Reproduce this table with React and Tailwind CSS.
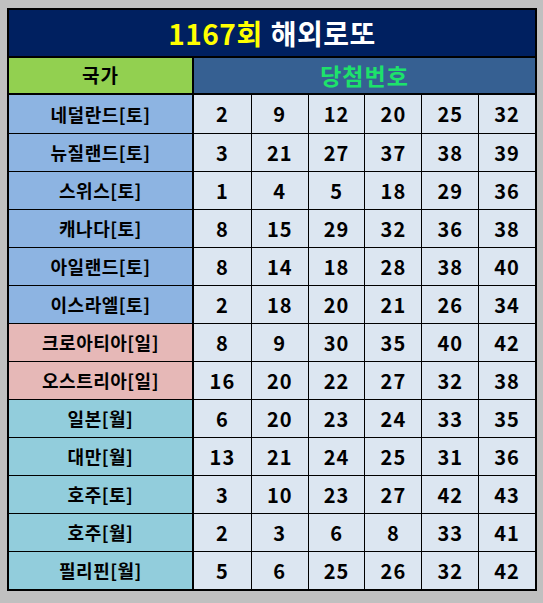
const ROWS = [
  { name: '네덜란드[토]', nums: [2, 9, 12, 20, 25, 32], bg: 'bg-[#8db4e2]' },
  { name: '뉴질랜드[토]', nums: [3, 21, 27, 37, 38, 39], bg: 'bg-[#8db4e2]' },
  { name: '스위스[토]', nums: [1, 4, 5, 18, 29, 36], bg: 'bg-[#8db4e2]' },
  { name: '캐나다[토]', nums: [8, 15, 29, 32, 36, 38], bg: 'bg-[#8db4e2]' },
  { name: '아일랜드[토]', nums: [8, 14, 18, 28, 38, 40], bg: 'bg-[#8db4e2]' },
  { name: '이스라엘[토]', nums: [2, 18, 20, 21, 26, 34], bg: 'bg-[#8db4e2]' },
  { name: '크로아티아[일]', nums: [8, 9, 30, 35, 40, 42], bg: 'bg-[#e6b8b7]' },
  { name: '오스트리아[일]', nums: [16, 20, 22, 27, 32, 38], bg: 'bg-[#e6b8b7]' },
  { name: '일본[월]', nums: [6, 20, 23, 24, 33, 35], bg: 'bg-[#92cddc]' },
  { name: '대만[월]', nums: [13, 21, 24, 25, 31, 36], bg: 'bg-[#92cddc]' },
  { name: '호주[토]', nums: [3, 10, 23, 27, 42, 43], bg: 'bg-[#92cddc]' },
  { name: '호주[월]', nums: [2, 3, 6, 8, 33, 41], bg: 'bg-[#92cddc]' },
  { name: '필리핀[월]', nums: [5, 6, 25, 26, 32, 42], bg: 'bg-[#92cddc]' },
]

export default function App() {
  return (
    <div
      className="min-h-screen bg-[#c0c0c0] pt-[8px] pl-[7px]"
      style={{ fontFamily: '"Noto Sans CJK KR", "Noto Sans", sans-serif' }}
    >
      <div className="w-[530px] border-2 border-black">
        <div className="h-[48px] bg-[#002060] border-b-2 border-black flex items-center justify-center text-[28px] font-bold leading-none tracking-[0.5px]">
          <span className="text-[#ffff00]">1167회</span>
          <span className="text-white ml-[8px]">해외로또</span>
        </div>
        <div className="h-[37px] grid grid-cols-[185px_1fr] border-b-2 border-black">
          <div className="bg-[#92d050] border-r-2 border-black flex items-center justify-center text-[19px] font-bold text-black tracking-[1px]">
            국가
          </div>
          <div className="bg-[#366092] flex items-center justify-center text-[23px] font-bold text-[#1de26b] tracking-[1px]">
            당첨번호
          </div>
        </div>
        {ROWS.map((row, i) => (
          <div
            key={i}
            className={`grid grid-cols-[185px_repeat(6,1fr)] h-[38px] ${i > 0 ? 'border-t border-black' : ''}`}
          >
            <div className={`${row.bg} border-r-2 border-black flex items-center justify-center text-[18px] font-bold text-black tracking-[0.5px]`}>
              {row.name}
            </div>
            {row.nums.map((n, j) => (
              <div
                key={j}
                className={`bg-[#dce6f1] flex items-center justify-center text-[20px] font-bold text-black tracking-[1px] ${j > 0 ? 'border-l border-black' : ''}`}
              >
                {n}
              </div>
            ))}
          </div>
        ))}
      </div>
    </div>
  )
}
